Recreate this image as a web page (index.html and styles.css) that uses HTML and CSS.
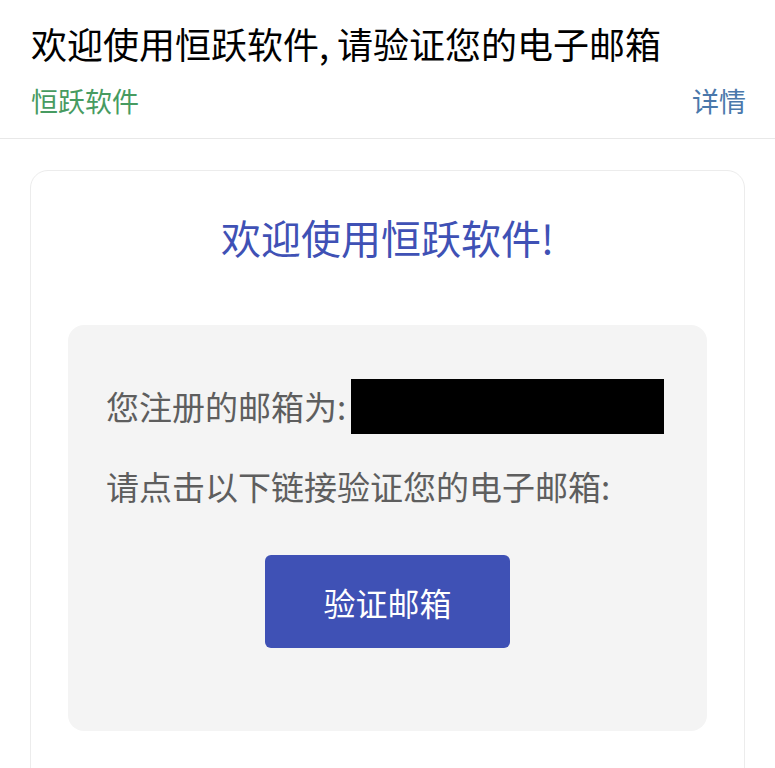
FILE: index.html
```html
<!DOCTYPE html>
<html lang="zh-CN">
<head>
    <meta charset="UTF-8">
    <meta name="viewport" content="width=device-width, initial-scale=1.0">
    <title>欢迎使用恒跃软件, 请验证您的电子邮箱</title>
    <link rel="stylesheet" href="styles.css">
</head>
<body>

<div class="mail-header">
    <h1 class="mail-subject">欢迎使用恒跃软件, 请验证您的电子邮箱</h1>
    <div class="mail-meta">
        <span class="sender">恒跃软件</span>
        <a class="details" href="#">详情</a>
    </div>
</div>

<div class="mail-body">
    <div class="card">
        <h2>欢迎使用恒跃软件!</h2>
        <div class="panel">
            <p class="line">您注册的邮箱为:<span class="redacted"></span></p>
            <p class="line second">请点击以下链接验证您的电子邮箱:</p>
            <div class="action">
                <a class="verify-btn" href="#">验证邮箱</a>
            </div>
        </div>
    </div>
</div>

</body>
</html>
```

FILE: styles.css
```css
body {
    margin: 0;
    background-color: #fff;
    font-family: "Noto Sans CJK SC", "Noto Sans", sans-serif;
}
.mail-header {
    height: 138px;
    padding: 0 29px 0 31px;
    border-bottom: 1px solid #e8e8e8;
}
.mail-subject {
    margin: 0;
    padding-top: 19px;
    font-size: 36px;
    font-weight: 400;
    line-height: 48px;
    color: #000;
}
.mail-meta {
    display: flex;
    justify-content: space-between;
    margin-top: 17px;
    font-size: 27px;
    line-height: 34px;
}
.mail-meta .sender {
    color: #479b61;
}
.mail-meta .details {
    color: #4a78ab;
    text-decoration: none;
}
.mail-body {
    padding: 31px 30px 0 30px;
}
.card {
    border: 1px solid #ececec;
    border-radius: 18px;
    padding: 36px 37px 60px 37px;
}
.card h2 {
    margin: 0 0 58px 0;
    text-align: center;
    font-size: 40px;
    font-weight: 400;
    line-height: 60px;
    color: #3f51b5;
}
.panel {
    background-color: #f4f4f4;
    border-radius: 16px;
    padding: 54px 38px 83px 38px;
}
.line {
    margin: 0;
    font-size: 33px;
    line-height: 55px;
    color: #5e5e5e;
    display: flex;
    align-items: center;
}
.line.second {
    margin-top: 25px;
}
.redacted {
    display: inline-block;
    width: 313px;
    height: 55px;
    margin-left: 5px;
    background-color: #000;
}
.action {
    display: flex;
    justify-content: center;
    margin-top: 41px;
}
.verify-btn {
    display: flex;
    align-items: center;
    justify-content: center;
    width: 245px;
    height: 93px;
    border-radius: 6px;
    background-color: #3f51b5;
    color: #fff;
    font-size: 32px;
    text-decoration: none;
}
```
